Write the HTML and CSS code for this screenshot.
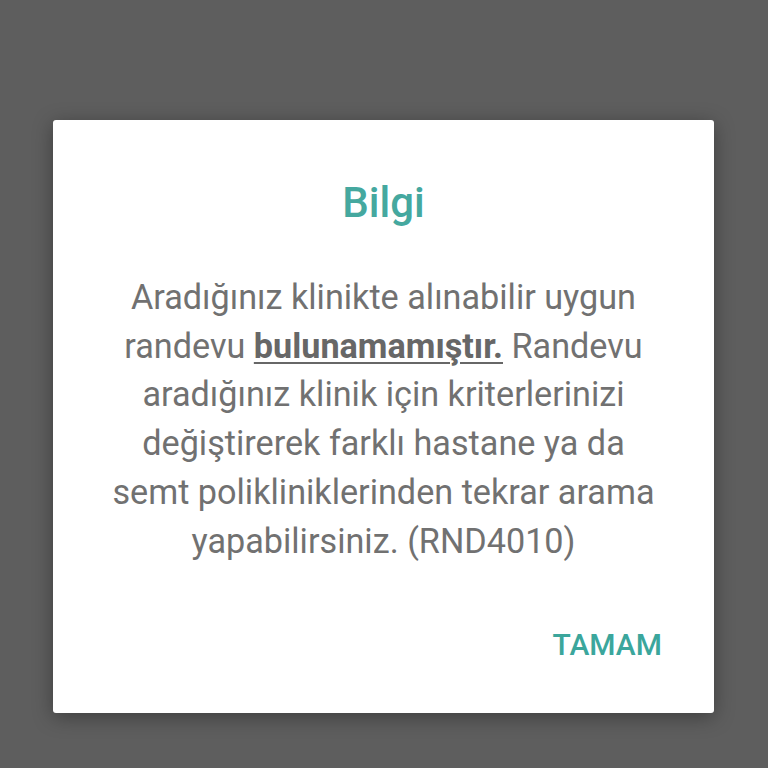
FILE: index.html
```html
<!DOCTYPE html>
<html lang="tr">
<head>
  <meta charset="UTF-8">
  <title>Bilgi</title>
  <link rel="stylesheet" href="styles.css">
</head>
<body>
  <div class="overlay">
    <div class="dialog">
      <h2 class="dialog-title">Bilgi</h2>
      <p class="dialog-text">
        Aradığınız klinikte alınabilir uygun<br>
        randevu <b>bulunamamıştır.</b> Randevu<br>
        aradığınız klinik için kriterlerinizi<br>
        değiştirerek farklı hastane ya da<br>
        semt polikliniklerinden tekrar arama<br>
        yapabilirsiniz. (RND4010)
      </p>
      <div class="dialog-actions">
        <button class="btn-text">TAMAM</button>
      </div>
    </div>
  </div>
</body>
</html>
```

FILE: styles.css
```css
* {
  margin: 0;
  padding: 0;
  box-sizing: border-box;
}
body {
  background: #5e5e5e;
  font-family: Roboto, 'Noto Sans', sans-serif;
}

.overlay {
  width: 768px;
  height: 768px;
  padding: 120px 54px 55px 53px;
}

.dialog {
  background: #fff;
  height: 593px;
  border-radius: 3px;
  box-shadow: 0 4px 20px rgba(0,0,0,0.35);
  display: flex;
  flex-direction: column;
  align-items: center;
  padding: 59px 30px 0;
}

.dialog-title {
  color: #45a89f;
  font-size: 42px;
  font-weight: 500;
  line-height: 48px;
}

.dialog-text {
  margin-top: 46px;
  color: #717171;
  font-size: 34.2px;
  line-height: 48.7px;
  text-align: center;
  white-space: nowrap;
}
.dialog-text b {
  font-weight: 700;
  color: #676767;
  text-decoration: underline;
  text-decoration-thickness: 2px;
  text-underline-offset: 4px;
}

.dialog-actions {
  align-self: stretch;
  display: flex;
  justify-content: flex-end;
  margin-top: 62px;
  padding-right: 22px;
}
.btn-text {
  border: none;
  background: none;
  color: #3ba69c;
  font-family: Roboto, sans-serif;
  font-size: 30px;
  font-weight: 500;
  line-height: 36px;
}
```
